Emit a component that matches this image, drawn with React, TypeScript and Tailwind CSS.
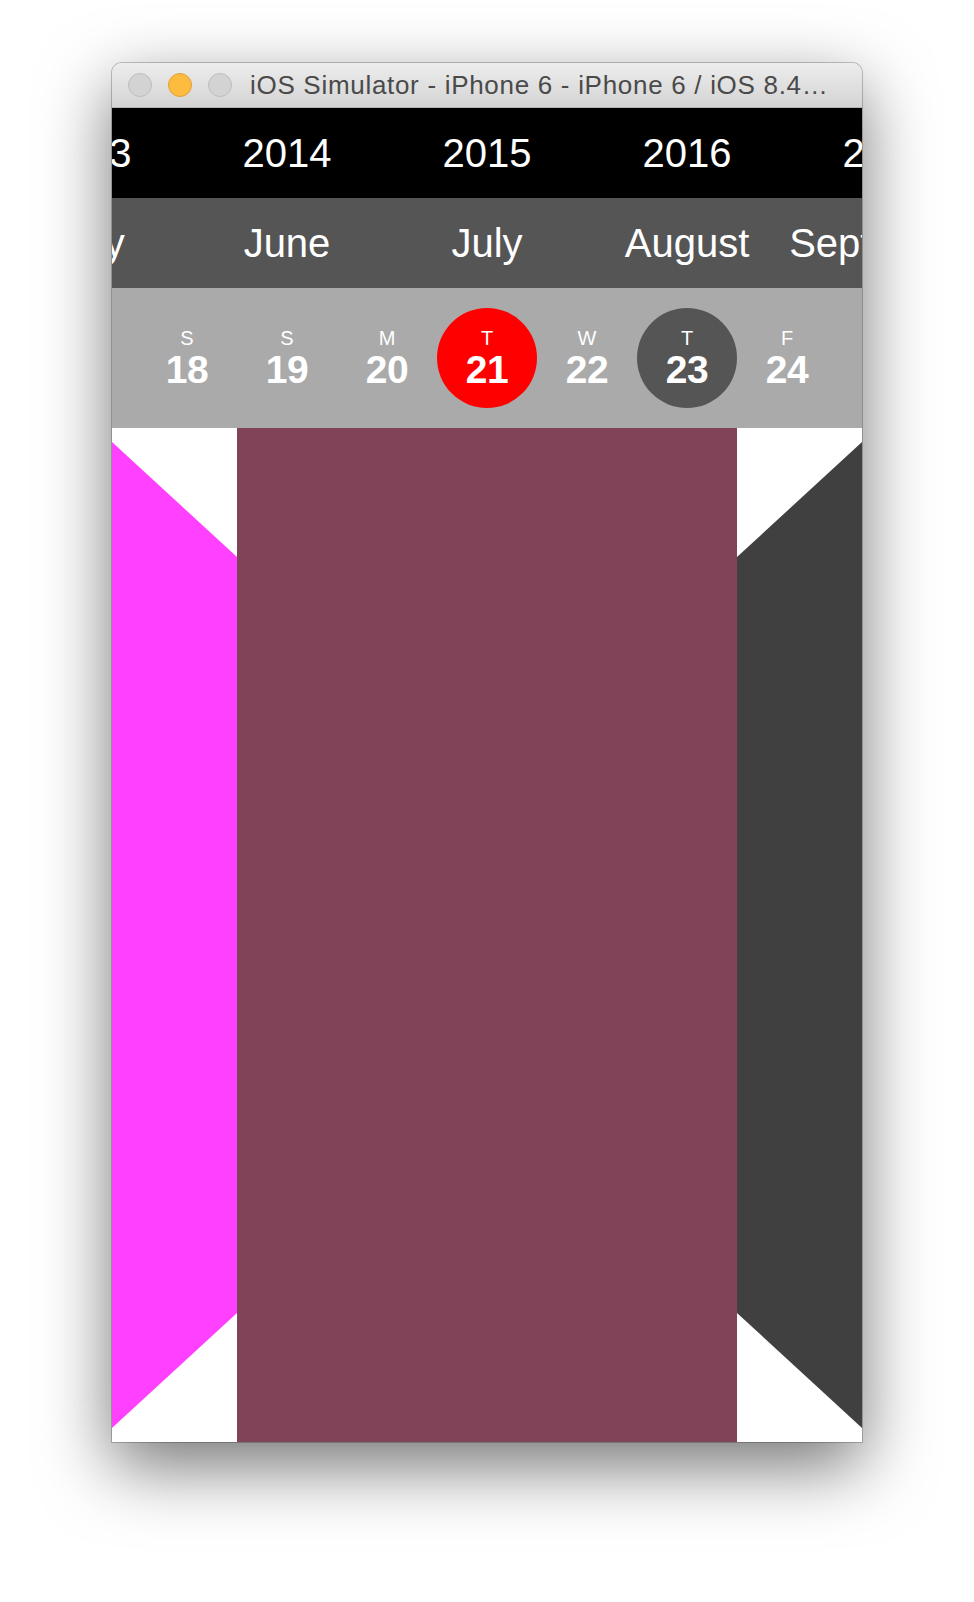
const years = ["2013", "2014", "2015", "2016", "2017"];
const months = ["May", "June", "July", "August", "September"];

const days = [
  { letter: "S", num: 18 },
  { letter: "S", num: 19 },
  { letter: "M", num: 20 },
  { letter: "T", num: 21, mark: "today" },
  { letter: "W", num: 22 },
  { letter: "T", num: 23, mark: "selected" },
  { letter: "F", num: 24 },
];

function TrafficLight({ color, border }: { color: string; border: string }) {
  return <span className={`block h-[24px] w-[24px] shrink-0 rounded-full border ${color} ${border}`} />;
}

function LabelStrip({ items, bg }: { items: string[]; bg: string }) {
  return (
    <div className={`flex h-[90px] items-center overflow-hidden ${bg}`}>
      <div className="-ml-[125px] flex">
        {items.map((item) => (
          <div key={item} className="flex w-[200px] shrink-0 justify-center whitespace-nowrap text-[40px] leading-[40px] text-white">
            {item}
          </div>
        ))}
      </div>
    </div>
  );
}

function DayCell({ letter, num, mark }: { letter: string; num: number; mark?: string }) {
  const circle = mark === "today" ? "bg-[#ff0000]" : mark === "selected" ? "bg-[#555555]" : "";
  return (
    <div className="flex w-[100px] shrink-0 items-center justify-center">
      <div className={`flex h-[100px] w-[100px] flex-col items-center justify-center rounded-full ${circle}`}>
        <span className="text-[20px] leading-[20px] text-white">{letter}</span>
        <span className="mt-[3px] text-[39px] font-bold leading-[37px] tracking-[-0.5px] text-white">{num}</span>
      </div>
    </div>
  );
}

export default function App() {
  return (
    <div
      className="flex h-[1602px] justify-center bg-white pt-[63px]"
      style={{ fontFamily: '"Liberation Sans", "Helvetica Neue", Arial, sans-serif' }}
    >
      <div className="h-fit w-[750px] overflow-hidden rounded-t-[10px] shadow-[0_0_0_1px_rgba(0,0,0,0.22),0_24px_70px_rgba(0,0,0,0.55)]">
        {/* title bar */}
        <div className="flex h-[45px] items-center border-b border-[#b3b3b3] bg-gradient-to-b from-[#ededed] to-[#d4d4d4] pl-[16px]">
          <div className="flex gap-[16px]">
            <TrafficLight color="bg-[#d3d3d3]" border="border-[#bdbdbd]" />
            <TrafficLight color="bg-[#fdbc40]" border="border-[#dea236]" />
            <TrafficLight color="bg-[#d3d3d3]" border="border-[#bdbdbd]" />
          </div>
          <span className="ml-[18px] whitespace-nowrap text-[26px] leading-[26px] tracking-[0.7px] text-[#4a4a4a]">
            iOS Simulator - iPhone 6 - iPhone 6 / iOS 8.4…
          </span>
        </div>

        {/* screen */}
        <div className="flex h-[1334px] flex-col">
          <LabelStrip items={years} bg="bg-black" />
          <LabelStrip items={months} bg="bg-[#555555]" />

          <div className="flex h-[140px] items-center justify-center bg-[#aaaaaa]">
            {days.map((d) => (
              <DayCell key={d.num} letter={d.letter} num={d.num} mark={d.mark} />
            ))}
          </div>

          <div className="flex flex-1 bg-white">
            <svg className="h-full w-[125px] shrink-0" viewBox="0 0 125 1014" preserveAspectRatio="none">
              <polygon points="0,14 125,129 125,885 0,1000" fill="#ff40ff" />
            </svg>
            <div className="h-full w-[500px] shrink-0 bg-[#804358]" />
            <svg className="h-full w-[125px] shrink-0" viewBox="0 0 125 1014" preserveAspectRatio="none">
              <polygon points="0,129 125,14 125,1000 0,885" fill="#404040" />
            </svg>
          </div>
        </div>
      </div>
    </div>
  );
}
